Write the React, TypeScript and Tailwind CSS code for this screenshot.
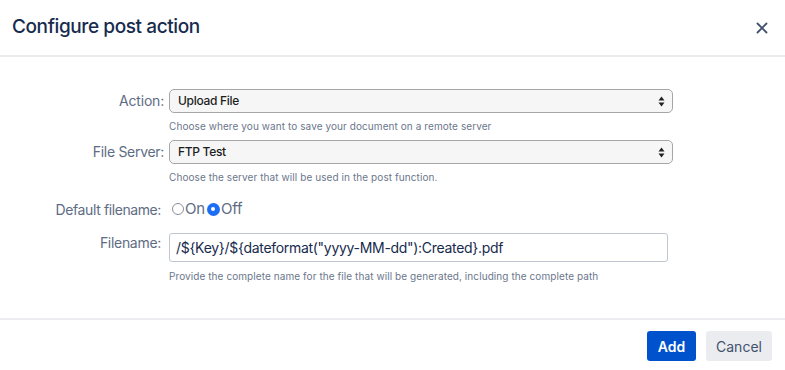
import React from "react";

function SelectBox({ value }: { value: string }) {
  return (
    <div className="flex h-[24px] w-[504px] items-center justify-between rounded-[5px] border border-[#a6a6a6] bg-[#f6f6f6] pl-[8px] pr-[7px]">
      <span className="text-[12px] font-medium tracking-[-0.3px] text-[#1d1d1d]">{value}</span>
      <svg width="7" height="11" viewBox="0 0 7 11">
        <path d="M3.5 0.5 L6.5 4.5 L0.5 4.5 Z" fill="#222" />
        <path d="M3.5 10.5 L6.5 6.5 L0.5 6.5 Z" fill="#222" />
      </svg>
    </div>
  );
}

function Help({ children }: { children: React.ReactNode }) {
  return (
    <div className="text-[10px] leading-[14px] tracking-[0.08px] text-[#6b778c]">{children}</div>
  );
}

export default function App() {
  return (
    <div
      className="flex h-[370px] w-[785px] flex-col bg-white text-[#172b4d]"
      style={{ fontFamily: "Inter, 'Noto Sans', sans-serif" }}
    >
      <div className="flex h-[55px] items-center justify-between pl-[12px] pr-[17px]">
        <h1 className="text-[19px] font-medium tracking-[-0.4px] text-[#172b4d]">Configure post action</h1>
        <svg width="12" height="12" viewBox="0 0 12 12">
          <path d="M1.5 1.5 L10.5 10.5 M10.5 1.5 L1.5 10.5" stroke="#42526e" strokeWidth="1.8" strokeLinecap="round" />
        </svg>
      </div>
      <div className="h-[263px] border-t-2 border-[#ebecf0] pt-[32px]">
        <div className="grid grid-cols-[164px_1fr] gap-x-[5px]">
          <div className="flex h-[22px] items-center justify-end text-[14px] tracking-[-0.2px] text-[#5e6c84]">Action:</div>
          <div>
            <SelectBox value="Upload File" />
            <div className="mt-[6px]">
              <Help>Choose where you want to save your document on a remote server</Help>
            </div>
          </div>

          <div className="mt-[7px] flex h-[22px] items-center justify-end text-[14px] tracking-[-0.3px] text-[#5e6c84]">File Server:</div>
          <div className="mt-[7px]">
            <SelectBox value="FTP Test" />
            <div className="mt-[6px]">
              <Help>Choose the server that will be used in the post function.</Help>
            </div>
          </div>

          <div className="mt-[15px] flex h-[20px] items-center justify-end pr-[3px] text-[14px] tracking-[-0.4px] text-[#5e6c84]">Default filename:</div>
          <div className="mt-[15px] flex h-[20px] items-center pl-[3px] text-[15px] tracking-[-0.2px] text-[#5e6c84]">
            <span className="h-[12px] w-[12px] rounded-full border border-[#8a8f99] bg-white" />
            <span className="ml-[1px]">On</span>
            <span className="ml-[2px] flex h-[13px] w-[13px] items-center justify-center rounded-full bg-[#1e6ef5]">
              <span className="h-[4px] w-[4px] rounded-full bg-white" />
            </span>
            <span className="ml-[1px]">Off</span>
          </div>

          <div className="mt-[14px] flex h-[18px] items-center justify-end pr-[3px] text-[14px] tracking-[-0.3px] text-[#5e6c84]">Filename:</div>
          <div className="mt-[14px]">
            <div className="flex h-[29px] w-[499px] items-center rounded-[3px] border border-[#c1c7d0] bg-white pl-[6px] text-[14px] tracking-[-0.3px] text-[#172b4d]">
              {'/${Key}/${dateformat("yyyy-MM-dd"):Created}.pdf'}
            </div>
            <div className="mt-[7px]">
              <Help>Provide the complete name for the file that will be generated, including the complete path</Help>
            </div>
          </div>
        </div>
      </div>
      <div className="flex flex-1 items-start justify-end gap-[10px] border-t-2 border-[#ebecf0] pr-[13px] pt-[11px]">
        <button className="h-[30px] w-[49px] rounded-[3px] bg-[#0052cc] text-[14px] font-semibold text-white">Add</button>
        <button className="h-[30px] w-[66px] rounded-[3px] bg-[#ebecf0] text-[14px] text-[#42526e]">Cancel</button>
      </div>
    </div>
  );
}
